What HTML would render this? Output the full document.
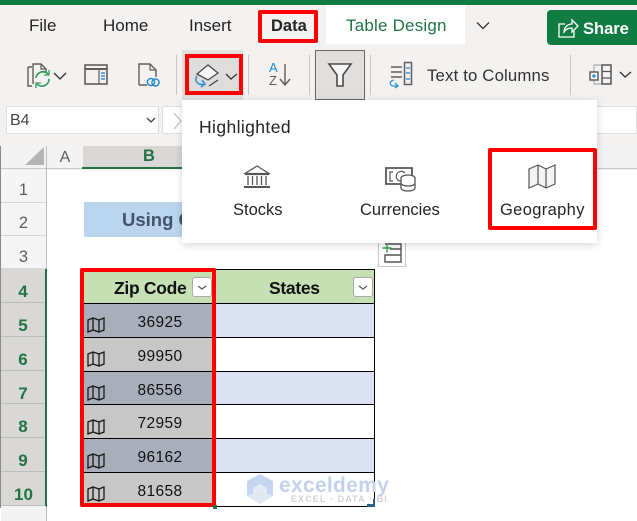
<!DOCTYPE html>
<html><head><meta charset="utf-8">
<style>
html,body{margin:0;padding:0;background:#fff}
#p{position:relative;width:637px;height:521px;overflow:hidden;background:#fff;font-family:"Liberation Sans",sans-serif;color:#252423}
#p div,#p svg{position:absolute}
.t{white-space:nowrap;line-height:20px;height:20px}
.tab{font-size:17px;top:16px}
.rh{left:1px;width:45px;height:33px;text-align:center;font-size:16.5px;line-height:41px;color:#605e5c;background:#f5f5f5;border-bottom:1px solid #d6d6d6;box-sizing:border-box;overflow:hidden}
.rs{left:1px;width:44px;height:34px;text-align:center;font-size:17px;font-weight:bold;line-height:45px;color:#217346;background:#d9d8d6;border-bottom:1px solid #bdbdbb;box-sizing:border-box;overflow:hidden}
.n{left:135px;width:50px;text-align:center;letter-spacing:.4px;font-size:15.5px;height:33px;line-height:33px;color:#111}
.ln{left:84px;width:291px;height:2px;background:#000}
.rb{border:4px solid #f00;box-sizing:border-box;border-radius:2px}
.fb{width:20px;height:20px;background:#fff;border:1px solid #ababab;border-radius:3px;box-sizing:border-box}
.sep{width:1px;background:#c8c6c4}
</style></head><body><div id="p">
<div style="left:0;top:0;width:637px;height:100px;background:#f3f2f1"></div>
<div style="left:0;top:0;width:637px;height:5px;background:#107c41"></div>
<div class="t tab" style="left:29px">File</div>
<div class="t tab" style="left:103px">Home</div>
<div class="t tab" style="left:189px">Insert</div>
<div class="t tab" style="left:271px;font-weight:bold;font-size:16.5px">Data</div>
<div style="left:326px;top:5px;width:139px;height:39px;background:#fff"></div>
<div class="t tab" style="left:346px;color:#217346;letter-spacing:.2px">Table Design</div>
<svg style="left:475px;top:20px" width="16" height="12"><path d="M2 2.500l6 6 6-6" fill="none" stroke="#323130" stroke-width="1.300"/></svg>
<div style="left:547px;top:10px;width:100px;height:35px;background:#107c41;border-radius:4px"></div>
<svg style="left:557px;top:17px" width="22" height="22" fill="none" stroke="#fff" stroke-width="1.300"><path d="M8 7H2v13h15v-6"/><path d="M7 15c0-5 4-8 8-8V3l6 6-6 6v-4c-4 0-6 1-8 4z"/></svg>
<div class="t" style="left:583px;top:19px;font-size:16.500px;font-weight:bold;color:#fff">Share</div>

<!-- ribbon icons -->
<svg style="left:26px;top:60px" width="42" height="30" fill="none"><path d="M2 7h4M2 7v19h4" stroke="#605e5c" stroke-width="1.400"/><path d="M7 24V4h8l5 5v3" stroke="#605e5c" stroke-width="1.400"/><path d="M15 4v5h5" stroke="#605e5c" stroke-width="1.200"/><path d="M10 18a7 7 0 0 1 12-4M23 19a7 7 0 0 1-12 5" stroke="#2f9e5b" stroke-width="1.700"/><path d="M23 10v5h-5M10 28v-5h5" stroke="#2f9e5b" stroke-width="1.300"/><path d="M28 13l6 6 6-6" stroke="#323130" stroke-width="1.300"/></svg>
<svg style="left:84px;top:64px" width="26" height="22" fill="none"><rect x="1" y="1" width="22" height="19" stroke="#605e5c" stroke-width="1.600" fill="#f3f2f1"/><path d="M1 5h22" stroke="#605e5c" stroke-width="2"/><path d="M15 5v15" stroke="#605e5c" stroke-width="1.200"/><path d="M17 9h4M17 12h4M17 15h4" stroke="#3a96dd" stroke-width="1.400"/></svg>
<svg style="left:137px;top:62px" width="24" height="26" fill="none"><path d="M2 23V2h11l6 6v7M2 23h8" stroke="#605e5c" stroke-width="1.400"/><path d="M13 2v6h6" stroke="#605e5c" stroke-width="1.200"/><circle cx="14" cy="20" r="3.600" stroke="#1e88d0" stroke-width="1.400"/><circle cx="18.500" cy="20.500" r="3.600" stroke="#1e88d0" stroke-width="1.400"/></svg>
<div class="sep" style="left:176px;top:55px;height:40px"></div>
<div style="left:182px;top:50px;width:61px;height:50px;background:#e1dfdd"></div>
<div style="left:185px;top:54px;width:58px;height:41px;background:#dfdddb;border:4px solid #f00;box-sizing:border-box"></div>
<svg style="left:193px;top:62px" width="48" height="28" fill="none"><path d="M4 12l11-9 10 8-10 7z" stroke="#4a4a4a" stroke-width="1.300" fill="#f5f5f5"/><path d="M16 24l9-6" stroke="#4a4a4a" stroke-width="1.300"/><path d="M4 14c-3 5 1 10 8 8" stroke="#2a8fdb" stroke-width="1.500"/><path d="M9 18l3 4-4 3" stroke="#2a8fdb" stroke-width="1.500"/><path d="M33 12l5 5 6-5" stroke="#323130" stroke-width="1.300"/></svg>
<div class="sep" style="left:248px;top:55px;height:40px"></div>
<div class="t" style="left:269px;top:61px;font-size:13px;line-height:14px;color:#1e88d0">A</div>
<div class="t" style="left:269px;top:74px;font-size:13px;line-height:14px;color:#605e5c">Z</div>
<svg style="left:279px;top:63px" width="12" height="24" fill="none"><path d="M6 1v21M1 16l5 6 5-6" stroke="#605e5c" stroke-width="1.400"/></svg>
<div class="sep" style="left:309px;top:55px;height:40px"></div>
<div style="left:315px;top:50px;width:50px;height:50px;background:#e1dfdd;border:1px solid #6b6a69;box-sizing:border-box"></div>
<svg style="left:327px;top:62px" width="27" height="26" fill="none"><path d="M2 2h22l-8 11v11h-6V13z" stroke="#4a4a4a" stroke-width="1.600" fill="#f6f6f6"/></svg>
<div class="sep" style="left:370px;top:55px;height:40px"></div>
<svg style="left:388px;top:61px" width="26" height="28" fill="none"><path d="M3 6h11M3 11h11M3 16h11" stroke="#605e5c" stroke-width="1.400"/><rect x="16.500" y="1.500" width="7" height="22" stroke="#605e5c" stroke-width="1.500"/><path d="M18 7h4M18 12h4M18 18h4" stroke="#3a96dd" stroke-width="1.400"/><path d="M6 19c-5 1-5 6 0 6h4M7 22l3 3-3 2" stroke="#2a8fdb" stroke-width="1.300"/></svg>
<div class="t" style="left:427px;top:66px;font-size:16.800px;color:#323130;letter-spacing:.15px">Text to Columns</div>
<div class="sep" style="left:570px;top:55px;height:40px"></div>
<svg style="left:589px;top:64px" width="46" height="22" fill="none"><path d="M5 1h8v19H5z" stroke="#999"/><rect x="1" y="8" width="8" height="8" stroke="#555" stroke-width="1.400" fill="#fff"/><path d="M3 12h4M5 10v4" stroke="#1e88d0" stroke-width="1.300"/><rect x="13" y="1" width="9" height="19" stroke="#555" stroke-width="1.500"/><path d="M13 7.500h9M13 14h9" stroke="#555" stroke-width="1.300"/><path d="M31 8l5 5 6-5" stroke="#323130" stroke-width="1.300"/></svg>

<!-- formula bar -->
<div style="left:0;top:100px;width:637px;height:46px;background:#f3f2f1"></div>
<div style="left:6px;top:106px;width:153px;height:28px;background:#fff;border:1px solid #e1dfdd;box-sizing:border-box"></div>
<div class="t" style="left:10px;top:111px;font-size:16px;color:#444">B4</div>
<svg style="left:146px;top:117px" width="10" height="7"><path d="M1 1l4 4 4-4" fill="none" stroke="#444" stroke-width="1.300"/></svg>
<div style="left:162px;top:106px;width:475px;height:28px;background:#fff;border:1px solid #e1dfdd;box-sizing:border-box"></div>
<svg style="left:173px;top:112px" width="10" height="18"><path d="M1 1l7 8-7 8" fill="none" stroke="#c8c6c4" stroke-width="1.300"/></svg>

<!-- headers -->
<div style="left:0;top:146px;width:637px;height:24px;background:#f3f3f3"></div>
<div style="left:0;top:168px;width:637px;height:1px;background:#c9c9c9"></div>
<div style="left:46px;top:146px;width:1px;height:375px;background:#bdbdbd"></div>
<svg style="left:24px;top:147px" width="21" height="19"><path d="M20 0v18H1z" fill="#b4b4b4"/></svg>
<div class="t" style="left:47px;top:146px;width:36px;height:23px;line-height:23px;text-align:center;font-size:16px;color:#605e5c">A</div>
<div style="left:83px;top:146px;width:100px;height:21px;background:#d9d8d6"></div>
<div style="left:82px;top:167px;width:101px;height:2px;background:#217346"></div>
<div class="t" style="left:83px;top:146px;width:132px;height:21px;line-height:21px;text-align:center;font-size:16.500px;font-weight:bold;color:#217346">B</div>
<div class="rh" style="top:170px">1</div>
<div class="rh" style="top:203px">2</div>
<div class="rh" style="top:236px;line-height:43px">3</div>
<div class="rs" style="top:269px">4</div>
<div class="rs" style="top:303px">5</div>
<div class="rs" style="top:337px">6</div>
<div class="rs" style="top:371px;height:33px">7</div>
<div class="rs" style="top:404px">8</div>
<div class="rs" style="top:438px">9</div>
<div class="rs" style="top:472px;padding-left:1px">10</div>
<div style="left:45px;top:269px;width:2px;height:238px;background:#217346"></div>
<div style="left:1px;top:506px;width:45px;height:15px;background:#f3f3f3"></div>
<div style="left:0;top:146px;width:1px;height:362px;background:#8a8a8a"></div>

<!-- sheet -->
<div style="left:84px;top:202px;width:100px;height:35px;background:#bcd5ee"></div>
<div class="t" style="left:122px;top:210px;font-size:18.500px;font-weight:bold;color:#44546a">Using C</div>

<!-- table -->
<div style="left:84px;top:270px;width:291px;height:33px;background:#c6e0b4"></div>
<div style="left:84px;top:304px;width:130px;height:33px;background:#a9aebb"></div>
<div style="left:84px;top:338px;width:130px;height:33px;background:#c7c7c7"></div>
<div style="left:84px;top:372px;width:130px;height:32px;background:#a9aebb"></div>
<div style="left:84px;top:405px;width:130px;height:33px;background:#c7c7c7"></div>
<div style="left:84px;top:439px;width:130px;height:33px;background:#a9aebb"></div>
<div style="left:84px;top:473px;width:130px;height:33px;background:#c7c7c7"></div>
<div style="left:215px;top:304px;width:160px;height:33px;background:#d9e1f2"></div>
<div style="left:215px;top:372px;width:160px;height:32px;background:#d9e1f2"></div>
<div style="left:215px;top:439px;width:160px;height:33px;background:#d9e1f2"></div>
<div class="ln" style="top:303px;height:1px"></div>
<div class="ln" style="top:337px;height:1px"></div>
<div class="ln" style="top:371px;height:1px"></div>
<div class="ln" style="top:404px;height:1px"></div>
<div class="ln" style="top:438px;height:1px"></div>
<div class="ln" style="top:472px;height:1px"></div>
<div class="ln" style="top:506px;height:1px"></div>
<div style="left:215px;top:269px;width:160px;height:1px;background:#000"></div>
<div style="left:374px;top:269px;width:1px;height:238px;background:#000"></div>
<div style="left:215px;top:269px;width:1px;height:238px;background:#000"></div>
<div class="t" style="left:114px;top:278px;font-size:17.500px;font-weight:bold;color:#111;letter-spacing:-.3px">Zip Code</div>
<div class="t" style="left:269px;top:278px;font-size:17.500px;font-weight:bold;color:#111;letter-spacing:-.3px">States</div>
<div class="fb" style="left:192px;top:277px"></div>
<svg style="left:197px;top:285px" width="10" height="6"><path d="M1 1l4 3 4-3" fill="none" stroke="#555" stroke-width="1.200"/></svg>
<div class="fb" style="left:353px;top:277px"></div>
<svg style="left:358px;top:285px" width="10" height="6"><path d="M1 1l4 3 4-3" fill="none" stroke="#555" stroke-width="1.200"/></svg>

<div class="n" style="top:306px">36925</div>
<div class="n" style="top:340px">99950</div>
<div class="n" style="top:374px">86556</div>
<div class="n" style="top:407px">72959</div>
<div class="n" style="top:441px">96162</div>
<div class="n" style="top:475px">81658</div>

<svg width="0" height="0" style="left:0;top:0"><defs><g id="mp" fill="none" stroke="#1a1a1a" stroke-width="1.300"><path d="M1 3l5-2 6 2 5-2v12l-5 2-6-2-5 2z"/><path d="M6 1v12M12 3v12"/></g></defs></svg>
<svg style="left:87px;top:317px" width="18" height="16"><use href="#mp"/></svg>
<svg style="left:87px;top:351px" width="18" height="16"><use href="#mp"/></svg>
<svg style="left:87px;top:385px" width="18" height="16"><use href="#mp"/></svg>
<svg style="left:87px;top:419px" width="18" height="16"><use href="#mp"/></svg>
<svg style="left:87px;top:453px" width="18" height="16"><use href="#mp"/></svg>
<svg style="left:87px;top:486px" width="18" height="16"><use href="#mp"/></svg>

<div class="rb" style="left:80px;top:268px;width:136px;height:239px"></div>
<div style="left:213px;top:505px;width:4px;height:4px;background:#217346"></div>
<svg style="left:367px;top:499px" width="8" height="8"><path d="M6 0h2v8H0V5h6z" fill="#2e5f85"/></svg>

<!-- watermark -->
<svg style="left:246px;top:473px" width="30" height="32"><path d="M14 1l13 7v15l-13 8-13-8V8z" fill="#c6d6f2"/><path d="M14 11l7 4v7l-7 4-7-4v-7z" fill="#e6eaf2"/><path d="M1 23l13 8 13-8-13-6z" fill="#dfe8f3"/></svg>
<div class="t" style="left:279px;top:476px;font-size:21px;font-weight:bold;color:#c4d2ef;letter-spacing:.3px">exceldemy</div>
<div class="t" style="left:291px;top:489px;font-size:9px;font-weight:bold;color:#d2d2d2;letter-spacing:1.100px">EXCEL · DATA · BI</div>

<!-- add-row icon -->
<div style="left:378px;top:240px;width:28px;height:27px;background:#fff;border:1px solid #c8c8c8;box-sizing:border-box"></div>
<svg style="left:381px;top:242px" width="22" height="22" fill="none"><path d="M4 2h16v18H4v-7h16M9 7h11" stroke="#555" stroke-width="1.400"/><path d="M1.500 6h9M6 1.500v9" stroke="#2ea44f" stroke-width="1.400"/></svg>

<!-- popup -->
<div style="left:182px;top:100px;width:415px;height:143px;background:#fff;box-shadow:0 2px 8px rgba(0,0,0,.16)"></div>
<div class="t" style="left:199px;top:117px;font-size:17.500px;color:#252423;letter-spacing:.4px">Highlighted</div>
<svg style="left:243px;top:165px" width="28" height="25" fill="none"><path d="M14 1L2 8.500h24zM2 9.500h24" stroke="#555" stroke-width="1.200"/><path d="M5 11v9M9.500 11v9M14 11v9M18.500 11v9M23 11v9" stroke="#555" stroke-width="1.300"/><path d="M1 22h26" stroke="#555" stroke-width="2"/></svg>
<div class="t" style="left:233px;top:200px;font-size:16.500px;color:#252423">Stocks</div>
<svg style="left:385px;top:166px" width="32" height="26" fill="none"><path d="M23 18H1V2h26v7" stroke="#555" stroke-width="1.800"/><path d="M8 6H5v9h3" stroke="#555" stroke-width="1.200"/><path d="M20 7a5 5 0 1 0-2 8" stroke="#555" stroke-width="1.200"/><ellipse cx="23" cy="12" rx="7" ry="3" fill="#fff" stroke="#555" stroke-width="1.300"/><path d="M16 12v10c0 4 14 4 14 0V12M16 17c0 4 14 4 14 0" fill="#fff" stroke="#555" stroke-width="1.300"/></svg>
<div class="t" style="left:360px;top:200px;font-size:16.500px;color:#252423">Currencies</div>
<svg style="left:527px;top:164px" width="30" height="26"><path d="M2 5l9-4 8 4 9-4v19l-9 4-8-4-9 4z" fill="#f3f3f3" stroke="#555" stroke-width="1.200"/><path d="M11 1v19M19 5v19" stroke="#555" stroke-width="1.200" fill="none"/></svg>
<div class="t" style="left:500px;top:200px;font-size:16.500px;color:#252423;letter-spacing:.35px">Geography</div>
<div class="rb" style="left:488px;top:148px;width:109px;height:82px"></div>
<div class="rb" style="left:258px;top:10px;width:60px;height:33px"></div>
</div></body></html>
